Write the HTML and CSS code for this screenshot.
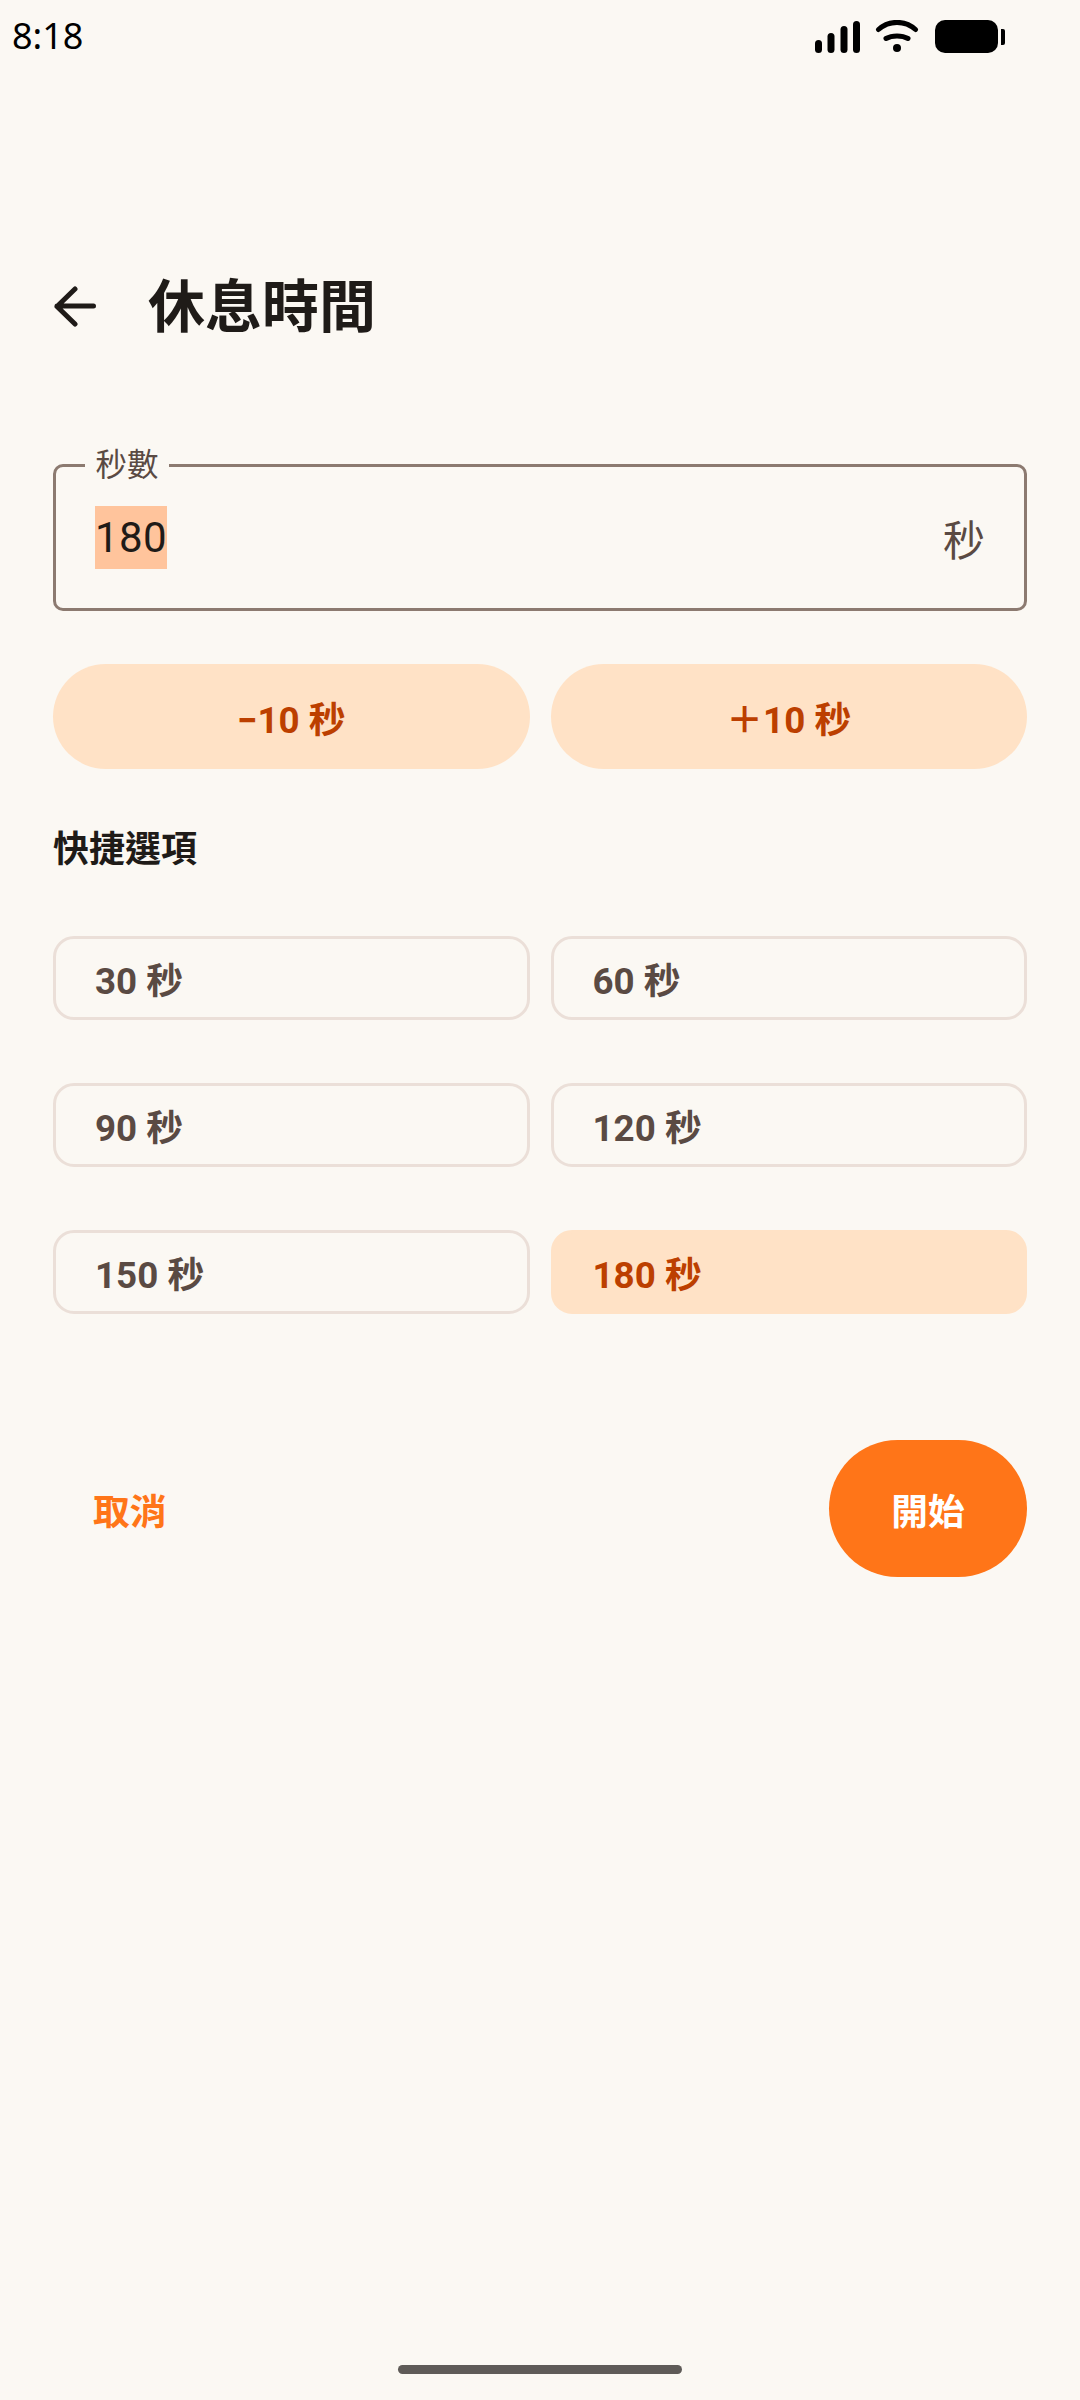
FILE: index.html
```html
<!DOCTYPE html>
<html lang="zh-Hant">
<head>
<meta charset="utf-8">
<title>休息時間</title>
<link rel="stylesheet" href="styles.css">
</head>
<body>
<div class="screen">
  <div class="status">
    <span class="time">8:18</span>
    <svg class="status-icons" width="192" height="34" viewBox="0 0 192 34">
      <g fill="#000">
        <rect x="0" y="20" width="7" height="13" rx="3.5"/>
        <rect x="12.500" y="13" width="7" height="20" rx="3.500"/>
        <rect x="25.500" y="6" width="7" height="27" rx="3.500"/>
        <rect x="38" y="1" width="7" height="32" rx="3.500"/>
        <circle cx="82" cy="28" r="4"/>
        <rect x="120" y="0" width="63" height="33" rx="10"/>
        <path d="M186 9h2a2 2 0 0 1 2 2v12a2 2 0 0 1-2 2h-2z"/>
      </g>
      <g fill="none" stroke="#000" stroke-width="5" stroke-linecap="round">
        <path d="M63.500 9.500C74 0 90 0 100.500 9.500"/>
        <path d="M71 18.500C77 15 87 15 93 18.500"/>
      </g>
    </svg>
  </div>
  <main class="content">
    <header class="title-row">
      <svg class="back" width="44" height="44" viewBox="0 0 44 44">
        <path d="M40.500 20H4M22 3L4 20.500 22 38" fill="none" stroke="#1f1b18" stroke-width="5" stroke-linecap="round" stroke-linejoin="round"/>
      </svg>
      <h1 class="title">休息時間</h1>
    </header>
    <div class="field">
      <span class="field-label">秒數</span>
      <span class="field-value">180</span>
      <span class="field-unit">秒</span>
    </div>
    <div class="steppers">
      <button class="stepper">−10 秒</button>
      <button class="stepper">＋10 秒</button>
    </div>
    <h2 class="section">快捷選項</h2>
    <div class="chips">
      <button class="chip">30 秒</button>
      <button class="chip">60 秒</button>
      <button class="chip">90 秒</button>
      <button class="chip">120 秒</button>
      <button class="chip">150 秒</button>
      <button class="chip chip-on">180 秒</button>
    </div>
    <div class="actions">
      <button class="cancel">取消</button>
      <button class="start">開始</button>
    </div>
  </main>
  <div class="home"></div>
</div>
</body>
</html>
```
FILE: styles.css
```css
* { box-sizing: border-box; }
html, body { margin: 0; padding: 0; }
body {
  background: #fbf8f3;
  font-family: Roboto, "Noto Sans CJK TC", sans-serif;
  color: #1f1b18;
}
button { font-family: inherit; border: 0; padding: 0; }
.screen {
  width: 1080px;
  height: 2400px;
  display: flex;
  flex-direction: column;
}
.status {
  height: 72px;
  flex: none;
  display: flex;
  justify-content: space-between;
  padding: 18px 73px 0 12px;
}
.time {
  font-family: "Noto Sans", sans-serif;
  font-size: 36px;
  line-height: 36px;
  color: #000;
}
.status-icons { margin-top: 2px; }
.content {
  flex: 1;
  padding: 0 53px;
  display: flex;
  flex-direction: column;
}
.title-row {
  display: flex;
  align-items: center;
  margin-top: 196px;
  height: 80px;
}
.back { flex: none; margin-right: 51px; }
.title {
  margin: 0;
  font-size: 57px;
  font-weight: 700;
  line-height: 80px;
}
.field {
  position: relative;
  margin-top: 116px;
  height: 147px;
  padding: 0 39px;
  border: 3px solid #8c7a70;
  border-radius: 10px;
  display: flex;
  align-items: center;
  justify-content: space-between;
}
.field-label {
  position: absolute;
  left: 29px;
  top: -22px;
  padding: 0 10.500px;
  font-size: 31.500px;
  line-height: 42px;
  color: #5a4a43;
  background: #fbf8f3;
}
.field-value {
  background: #ffc49c;
  font-size: 42px;
  line-height: 63px;
  height: 63px;
  display: block;
  letter-spacing: 0.4px;
}
.field-unit {
  font-size: 42px;
  color: #5a4a43;
}
.steppers {
  display: grid;
  grid-template-columns: 1fr 1fr;
  gap: 21px;
  margin-top: 53px;
}
.stepper {
  height: 105px;
  border-radius: 52.500px;
  background: #ffe2c6;
  color: #bc3f00;
  font-size: 36.750px;
  font-weight: 700;
}
.section {
  margin: 56px 0 0;
  font-size: 36px;
  line-height: 50px;
  font-weight: 700;
}
.chips {
  display: grid;
  grid-template-columns: 1fr 1fr;
  gap: 63px 21px;
  margin-top: 61px;
}
.chip {
  height: 84px;
  border: 3px solid #ebdfd8;
  border-radius: 21px;
  background: transparent;
  color: #5a4a43;
  font-size: 36.750px;
  font-weight: 700;
  text-align: left;
  padding-left: 39px;
}
.chip-on {
  background: #ffe2c6;
  border-color: #ffe2c6;
  color: #bc3f00;
}
.actions {
  display: flex;
  justify-content: space-between;
  align-items: center;
  margin-top: 126px;
}
.cancel {
  background: transparent;
  color: #ff7518;
  font-size: 36.750px;
  font-weight: 700;
  padding-left: 40px;
}
.start {
  width: 198px;
  height: 137px;
  border-radius: 68.500px;
  background: #ff7518;
  color: #fff;
  font-size: 36.750px;
  font-weight: 700;
}
.home {
  flex: none;
  align-self: center;
  width: 284px;
  height: 9px;
  border-radius: 4.500px;
  background: #5f5b58;
  margin-bottom: 26px;
}
```
